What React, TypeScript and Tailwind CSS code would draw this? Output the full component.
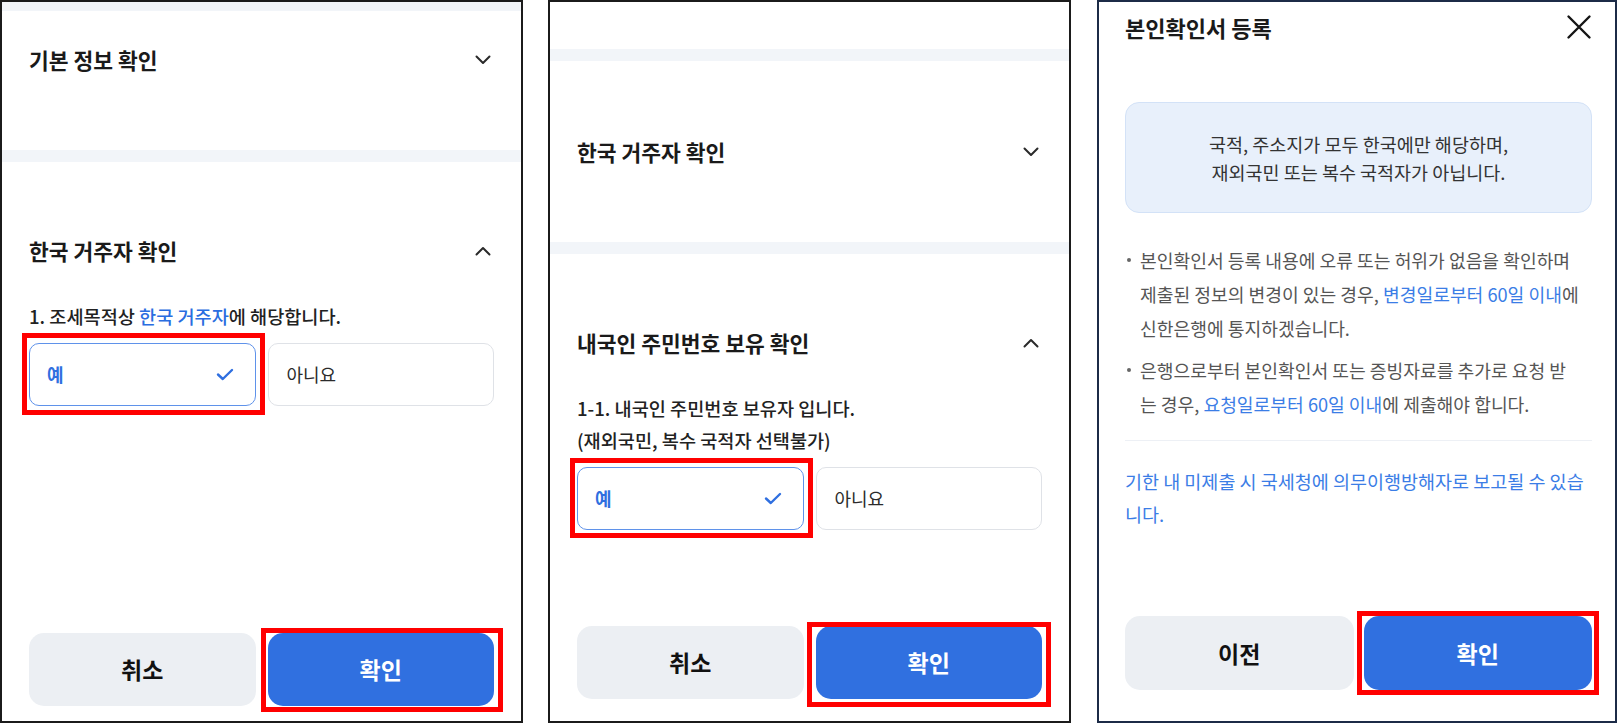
import React from "react";

// 주의: 클래스 문자열은 전부 그대로 적어야 Tailwind가 잡는다

function Chevron({ up }: { up?: boolean }) {
  return (
    <svg width="16" height="10" viewBox="0 0 16 10" className="mr-[3px]" fill="none" stroke="#2a2a2a" strokeWidth="2" strokeLinecap="round" strokeLinejoin="round">
      <polyline points={up ? "1.5,8.5 8,2 14.5,8.5" : "1.5,1.5 8,8 14.5,1.5"} />
    </svg>
  );
}

function CheckIcon() {
  return (
    <svg width="18" height="13" viewBox="0 0 18 13" fill="none" stroke="#2f6fe0" strokeWidth="2.4" strokeLinecap="round" strokeLinejoin="round">
      <polyline points="2,6.5 6.8,11 16,2" />
    </svg>
  );
}

function SectionHeader({ title, open }: { title: string; open?: boolean }) {
  return (
    <div className="flex h-[28px] items-center justify-between">
      <span className="text-[21.5px] font-bold leading-[28px] text-[#1a1a1a]">{title}</span>
      <Chevron up={open} />
    </div>
  );
}

function RedFrame({ className }: { className: string }) {
  return <div className={"pointer-events-none absolute border-[5px] border-[#ff0000] " + className} />;
}

function YesNo({ frame }: { frame: string }) {
  return (
    <div className="mt-[11px] grid grid-cols-2 gap-[12px]">
      <div className="relative">
        <div className="flex h-[63px] items-center justify-between rounded-[10px] border-[1.5px] border-[#5f92ea] bg-white pl-[17px] pr-[21px]">
          <span className="text-[18px] font-bold text-[#2f6fe0]">예</span>
          <CheckIcon />
        </div>
        <RedFrame className={frame} />
      </div>
      <div className="flex h-[63px] items-center rounded-[10px] border border-[#dfe2e7] bg-white pl-[18px]">
        <span className="text-[18px] text-[#2b2b2b]">아니요</span>
      </div>
    </div>
  );
}

function Footer({ left, frame, gap, height, pb }: { left: string; frame: string; gap: string; height: string; pb: string }) {
  return (
    <div className={"grid grid-cols-2 " + gap + " " + pb}>
      <button className={"rounded-[15px] bg-[#eceff3] text-[23px] font-bold text-[#111] " + height}>{left}</button>
      <div className="relative">
        <button className={"w-full rounded-[15px] bg-[#3070e0] text-[23px] font-bold text-white " + height}>확인</button>
        <RedFrame className={frame} />
      </div>
    </div>
  );
}

function PanelOne() {
  return (
    <div className="flex h-[723px] w-[523px] shrink-0 flex-col overflow-hidden border-2 border-[#1b1b1b] bg-white">
      <div className="flex-1">
        <div className="h-[9px] bg-[#f2f5f9]" />
        <div className="h-[139px] px-[27px] pt-[35px]">
          <SectionHeader title="기본 정보 확인" />
        </div>
        <div className="h-[12px] bg-[#f2f5f9]" />
        <div className="px-[27px] pt-[75px]">
          <SectionHeader title="한국 거주자 확인" open />
          <p className="mt-[35px] text-[18.6px] font-medium leading-[32px] text-[#222]">
            1. 조세목적상 <span className="text-[#2a6de0]">한국 거주자</span>에 해당합니다.
          </p>
          <YesNo frame="-left-[7px] -right-[9px] -top-[10px] -bottom-[9px]" />
        </div>
      </div>
      <div className="px-[27px]">
        <Footer left="취소" gap="gap-[12px]" height="h-[73px]" pb="pb-[15px]" frame="-left-[7px] -right-[9px] -top-[5px] -bottom-[6px]" />
      </div>
    </div>
  );
}

function PanelTwo() {
  return (
    <div className="flex h-[723px] w-[523px] shrink-0 flex-col overflow-hidden border-2 border-[#1b1b1b] bg-white">
      <div className="flex-1">
        <div className="h-[47px]" />
        <div className="h-[12px] bg-[#f2f5f9]" />
        <div className="flex h-[181px] flex-col justify-center px-[27px]">
          <SectionHeader title="한국 거주자 확인" />
        </div>
        <div className="h-[12px] bg-[#f2f5f9]" />
        <div className="px-[27px] pt-[75px]">
          <SectionHeader title="내국인 주민번호 보유 확인" open />
          <p className="mt-[35px] text-[18.6px] font-medium leading-[32px] text-[#222]">
            1-1. 내국인 주민번호 보유자 입니다.
            <br />
            (재외국민, 복수 국적자 선택불가)
          </p>
          <YesNo frame="-left-[7px] -right-[9px] -top-[9px] -bottom-[8px]" />
        </div>
      </div>
      <div className="px-[27px]">
        <Footer left="취소" gap="gap-[12px]" height="h-[73px]" pb="pb-[22px]" frame="-left-[9px] -right-[9px] -top-[4px] -bottom-[8px]" />
      </div>
    </div>
  );
}

function Bullet({ children }: { children: React.ReactNode }) {
  return (
    <li className="flex">
      <span className="relative w-[15px] shrink-0">
        <span className="absolute left-[2px] top-[15px] h-[4px] w-[4px] rounded-full bg-[#666]" />
      </span>
      <span className="flex flex-col">{children}</span>
    </li>
  );
}

function PanelThree() {
  return (
    <div className="flex h-[723px] w-[520px] shrink-0 flex-col overflow-hidden border-2 border-[#1c2b47] bg-white pl-[26px] pr-[23px]">
      <div className="flex-1">
        <div className="mt-[11px] flex h-[28px] items-center justify-between">
          <h2 className="text-[22px] font-bold leading-[28px] text-[#1a1a1a]">본인확인서 등록</h2>
          <svg width="26" height="26" viewBox="0 0 26 26" fill="none" stroke="#151515" strokeWidth="2.4" strokeLinecap="round">
            <path d="M2.5 2.5 23.5 23.5M23.5 2.5 2.5 23.5" />
          </svg>
        </div>

        <div className="mt-[61px] flex h-[111px] flex-col items-center justify-center rounded-[14px] border border-[#d3e2f7] bg-[#e8f0fb] text-center text-[18.5px] leading-[28px] text-[#333]">
          <span>국적, 주소지가 모두 한국에만 해당하며,</span>
          <span>재외국민 또는 복수 국적자가 아닙니다.</span>
        </div>

        <ul className="mt-[30px] flex flex-col gap-[8px] text-[18.2px] leading-[34px] text-[#555]">
          <Bullet>
            <span className="whitespace-nowrap">본인확인서 등록 내용에 오류 또는 허위가 없음을 확인하며</span>
            <span className="whitespace-nowrap">
              제출된 정보의 변경이 있는 경우, <span className="text-[#3b7de6]">변경일로부터 60일 이내</span>에
            </span>
            <span className="whitespace-nowrap">신한은행에 통지하겠습니다.</span>
          </Bullet>
          <Bullet>
            <span className="whitespace-nowrap">은행으로부터 본인확인서 또는 증빙자료를 추가로 요청 받</span>
            <span className="whitespace-nowrap">
              는 경우, <span className="text-[#3b7de6]">요청일로부터 60일 이내</span>에 제출해야 합니다.
            </span>
          </Bullet>
        </ul>

        <div className="mt-[19px] h-px bg-[#edf0f5]" />

        <p className="mt-[24px] flex flex-col text-[18.5px] leading-[33px] text-[#3b7de6]">
          <span className="whitespace-nowrap">기한 내 미제출 시 국세청에 의무이행방해자로 보고될 수 있습</span>
          <span>니다.</span>
        </p>
      </div>
      <Footer left="이전" gap="gap-[10px]" height="h-[74px]" pb="pb-[31px]" frame="-left-[7px] -right-[7px] -top-[5px] -bottom-[5px]" />
    </div>
  );
}

export default function App() {
  return (
    <div className="flex h-[724px] w-[1619px] items-start bg-white font-['Noto_Sans_CJK_KR','Noto_Sans',sans-serif]">
      <PanelOne />
      <div className="w-[25px] shrink-0" />
      <PanelTwo />
      <div className="w-[26px] shrink-0" />
      <PanelThree />
    </div>
  );
}
